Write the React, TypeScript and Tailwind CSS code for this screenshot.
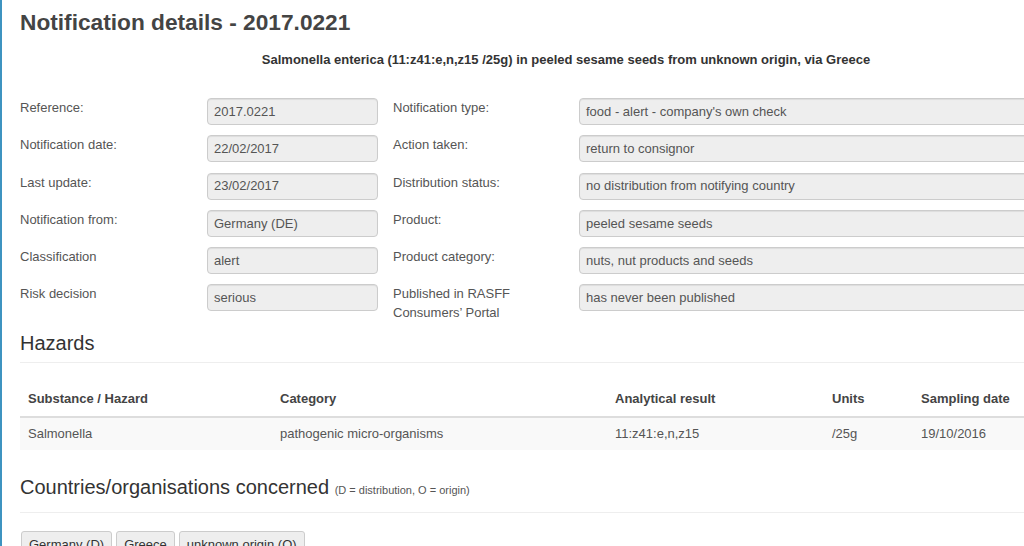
import React from 'react';

const FONT = { fontFamily: '"Liberation Sans", Arial, Helvetica, sans-serif' };

const LEFT_FIELDS: [string, string][] = [
  ['Reference:', '2017.0221'],
  ['Notification date:', '22/02/2017'],
  ['Last update:', '23/02/2017'],
  ['Notification from:', 'Germany (DE)'],
  ['Classification', 'alert'],
  ['Risk decision', 'serious'],
];

const RIGHT_FIELDS: [string, string][] = [
  ['Notification type:', "food - alert - company's own check"],
  ['Action taken:', 'return to consignor'],
  ['Distribution status:', 'no distribution from notifying country'],
  ['Product:', 'peeled sesame seeds'],
  ['Product category:', 'nuts, nut products and seeds'],
  ['Published in RASFF Consumers\u2019 Portal', 'has never been published'],
];

const COUNTRIES = ['Germany (D)', 'Greece', 'unknown origin (O)'];

export default function App() {
  return (
    <div className="flex h-[546px] w-[1024px] overflow-hidden bg-white" style={FONT}>
      <div className="w-[2px] shrink-0 bg-[#3d93c0]" />
      <div className="w-[1110px] shrink-0 pl-[18px]">
        <h1 className="text-[22.7px] font-bold leading-[44px] text-[#444]">
          Notification details - 2017.0221
        </h1>
        <p className="mt-[8px] text-center text-[13px] font-bold leading-[16px] text-[#333]">
          Salmonella enterica (11:z41:e,n,z15 /25g) in peeled sesame seeds from unknown origin, via
          Greece
        </p>

        <div className="mt-[30px] flex flex-col gap-y-[10.25px]">
          {LEFT_FIELDS.map(([l, v], i) => {
            const [rl, rv] = RIGHT_FIELDS[i];
            return (
              <div key={l} className="flex">
                <div className="w-[187px] text-[13px] leading-[19px] text-[#555]">{l}</div>
                <Field value={v} width="w-[171px]" />
                <div className="w-[201px] pl-[15px] text-[13px] leading-[19px] text-[#555]">
                  <div className={i === 5 ? 'w-[140px]' : ''}>{rl}</div>
                </div>
                <Field value={rv} width="w-[530px]" />
              </div>
            );
          })}
        </div>

        <h2 className="mt-[9px] text-[20px] leading-[24px] text-[#333]">Hazards</h2>
        <div className="mt-[7px] h-px bg-[#eee]" />

        <table className="mt-[19px] w-full border-collapse text-[13px] text-[#555]">
          <thead>
            <tr className="border-b-2 border-[#ddd] text-left text-[#444]">
              <th className="w-[252px] px-[8px] py-[8px] font-bold leading-[18px]">Substance / Hazard</th>
              <th className="w-[335px] px-[8px] py-[8px] font-bold leading-[18px]">Category</th>
              <th className="w-[217px] px-[8px] py-[8px] font-bold leading-[18px]">Analytical result</th>
              <th className="w-[89px] px-[8px] py-[8px] font-bold leading-[18px]">Units</th>
              <th className="px-[8px] py-[8px] font-bold leading-[18px]">Sampling date</th>
            </tr>
          </thead>
          <tbody>
            <tr className="bg-[#f9f9f9]">
              <td className="px-[8px] py-[7px] leading-[18px]">Salmonella</td>
              <td className="px-[8px] py-[7px] leading-[18px]">pathogenic micro-organisms</td>
              <td className="px-[8px] py-[7px] leading-[18px]">11:z41:e,n,z15</td>
              <td className="px-[8px] py-[7px] leading-[18px]">/25g</td>
              <td className="px-[8px] py-[7px] leading-[18px]">19/10/2016</td>
            </tr>
          </tbody>
        </table>

        <h2 className="mt-[25px] text-[20px] leading-[24px] text-[#333]">
          Countries/organisations concerned{' '}
          <span className="text-[11px] text-[#555]">(D = distribution, O = origin)</span>
        </h2>
        <div className="mt-[10px] h-px bg-[#eee]" />

        <div className="mt-[18px] flex gap-[4px] pl-px">
          {COUNTRIES.map((c) => (
            <span
              key={c}
              className="rounded-[3px] border border-[#ccc] bg-[#eee] px-[7px] py-[4px] text-[13px] leading-[18px] text-[#333]"
            >
              {c}
            </span>
          ))}
        </div>
      </div>
    </div>
  );
}

function Field({ value, width }: { value: string; width: string }) {
  return (
    <div
      className={`${width} flex h-[27px] shrink-0 items-center rounded-[4px] border border-[#ccc] bg-[#eee] px-[6px] text-[13px] text-[#555] shadow-[inset_0_1px_1px_rgba(0,0,0,0.075)]`}
    >
      {value}
    </div>
  );
}
